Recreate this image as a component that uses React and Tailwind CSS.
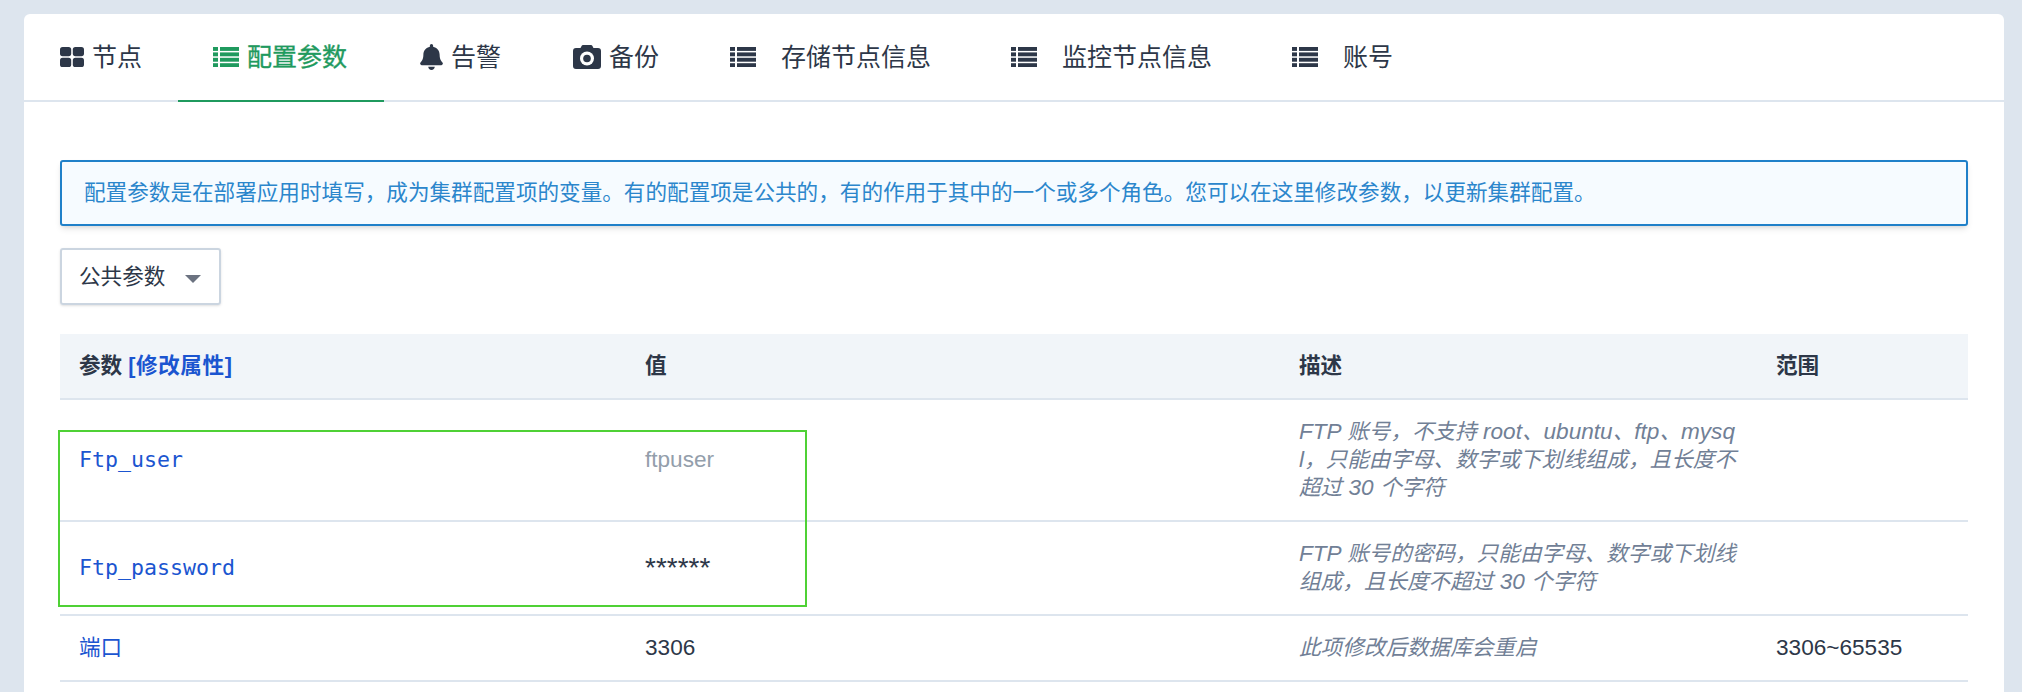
import { FaBell } from 'react-icons/fa';

// fa-list has four rows, the icon packages only ship the three row one
function ListIcon({ className }) {
    return (
        <svg className={className} viewBox="0 0 26 20" fill="currentColor">
            {[0, 5.4, 10.8, 16.2].map((y) => (
                <g key={y}>
                    <rect x="0" y={y} width="5" height="3.9" />
                    <rect x="7" y={y} width="19" height="3.9" />
                </g>
            ))}
        </svg>
    );
}

function GridIcon({ className }) {
    return (
        <svg className={className} viewBox="0 0 24 20" fill="currentColor">
            <rect x="0" y="0" width="11.2" height="9.2" rx="2.6" />
            <rect x="12.8" y="0" width="11.2" height="9.2" rx="2.6" />
            <rect x="0" y="10.8" width="11.2" height="9.2" rx="2.6" />
            <rect x="12.8" y="10.8" width="11.2" height="9.2" rx="2.6" />
        </svg>
    );
}

function CameraIcon({ className }) {
    return (
        <svg className={className} viewBox="0 0 28 24">
            <path
                fill="currentColor"
                d="M3 3h4.5l1.2-2.2A1.5 1.5 0 0 1 10 0h8a1.5 1.5 0 0 1 1.3.8L20.5 3H25a3 3 0 0 1 3 3v15a3 3 0 0 1-3 3H3a3 3 0 0 1-3-3V6a3 3 0 0 1 3-3z"
            />
            <circle cx="14" cy="13.5" r="7" fill="#fff" />
            <circle cx="14" cy="13.5" r="3.8" fill="currentColor" />
        </svg>
    );
}

function Tab({ icon, label, active, wide }) {
    let spacing = 'gap-2 pl-9 pr-9';
    if (wide) spacing = 'gap-[25px] pl-[35px] pr-[45px]';
    if (active) spacing = 'gap-2 pl-[35px] pr-[37px]';

    return (
        <div
            className={`flex h-[88px] items-center border-b-2 ${spacing} ${
                active ? 'border-[#1f9a5e] text-[#1f9a5e] [-webkit-text-stroke:0.4px_#1f9a5e]' : 'border-transparent text-[#2d3748]'
            }`}
        >
            {icon}
            <span className="text-[25px] leading-none">{label}</span>
        </div>
    );
}

// latin runs sit a little larger than the chinese text around them
function Mixed({ text }) {
    return text.split(/([A-Za-z0-9 ]+)/).map((part, i) =>
        /[A-Za-z0-9]/.test(part) ? (
            <span key={i} className="text-[22.6px]">{part}</span>
        ) : (
            part
        )
    );
}

const rows = [
    {
        name: 'Ftp_user',
        mono: true,
        value: 'ftpuser',
        valueClass: 'text-[22.6px] text-[#939eab]',
        desc: 'FTP 账号，不支持 root、ubuntu、ftp、mysql，只能由字母、数字或下划线组成，且长度不超过 30 个字符',
        range: '',
    },
    {
        name: 'Ftp_password',
        mono: true,
        value: '******',
        valueClass: 'text-[28px]',
        desc: 'FTP 账号的密码，只能由字母、数字或下划线组成，且长度不超过 30 个字符',
        range: '',
    },
    { name: '端口', value: '3306', valueClass: 'text-[22.6px]', desc: '此项修改后数据库会重启', range: '3306~65535' },
];

export default function App() {
    return (
        <div className="h-[692px] overflow-hidden bg-[#dde5ee] pt-[14px] pl-6 pr-[18px] font-['Liberation_Sans','Noto_Sans_CJK_SC',sans-serif] text-[21.6px] text-[#2d3748]">
            <div className="h-[700px] rounded-t-md bg-white">
                {/* Tabs */}
                <div className="relative flex">
                    <div className="absolute inset-x-0 bottom-0 h-0.5 bg-[#dde5ee]" />
                    <div className="relative flex">
                        <Tab icon={<GridIcon className="h-5 w-6" />} label="节点" />
                        <Tab icon={<ListIcon className="h-5 w-[26px]" />} label="配置参数" active />
                        <Tab icon={<FaBell className="h-[26px] w-[23px]" />} label="告警" />
                        <Tab icon={<CameraIcon className="h-6 w-7" />} label="备份" />
                        <Tab icon={<ListIcon className="h-5 w-[26px]" />} label="存储节点信息" wide />
                        <Tab icon={<ListIcon className="h-5 w-[26px]" />} label="监控节点信息" wide />
                        <Tab icon={<ListIcon className="h-5 w-[26px]" />} label="账号" wide />
                    </div>
                </div>

                <div className="px-9 pt-[58px]">
                    {/* Notice */}
                    <div className="flex h-[66px] items-center rounded-[3px] border-2 border-[#1f80c9] bg-[#f6fbff] pl-[22px] text-[#2b86cc] shadow-md">
                        配置参数是在部署应用时填写，成为集群配置项的变量。有的配置项是公共的，有的作用于其中的一个或多个角色。您可以在这里修改参数，以更新集群配置。
                    </div>

                    {/* Parameter group select */}
                    <div className="mt-[22px] flex h-[57px] w-[161px] items-center rounded-[3px] border-2 border-[#cbd5e0] pl-[17px] shadow-sm">
                        <span className="pt-px">公共参数</span>
                        <span className="ml-5 mt-1 h-0 w-0 border-x-[8px] border-t-[8px] border-x-transparent border-t-[#6b7280]" />
                    </div>

                    {/* Parameter table */}
                    <div className="relative mt-[29px]">
                        <table className="w-full table-fixed border-collapse">
                            <colgroup>
                                <col className="w-[566px]" />
                                <col className="w-[654px]" />
                                <col className="w-[477px]" />
                                <col className="w-[211px]" />
                            </colgroup>
                            <thead>
                                <tr className="h-[65px] border-b-2 border-[#dde5ee] bg-[#f1f5f9] text-left">
                                    <th className="px-[19px] font-semibold">
                                        参数 <a className="tracking-[0.6px] text-[#1b55d0]">[修改属性]</a>
                                    </th>
                                    <th className="px-[19px] font-semibold">值</th>
                                    <th className="px-[19px] font-semibold">描述</th>
                                    <th className="px-[19px] font-semibold">范围</th>
                                </tr>
                            </thead>
                            <tbody>
                                {rows.map((row) => (
                                    <tr key={row.name} className="border-b-2 border-[#dde5ee]">
                                        <td className="px-[19px] text-[#1b55d0]">
                                            <span className={row.mono ? "font-['DejaVu_Sans_Mono',monospace]" : ''}>{row.name}</span>
                                        </td>
                                        <td className={`px-[19px] ${row.valueClass}`}>{row.value}</td>
                                        <td className="px-[19px] py-[18px] leading-[28px] break-all italic text-[#718096]">
                                            <Mixed text={row.desc} />
                                        </td>
                                        <td className="px-[19px] text-[22.6px]">{row.range}</td>
                                    </tr>
                                ))}
                            </tbody>
                        </table>

                        {/* Highlight drawn over the screenshot */}
                        <div className="absolute left-[-2px] top-[96px] h-[177px] w-[749px] border-2 border-[#4fd135]" />
                    </div>
                </div>
            </div>
        </div>
    );
}
